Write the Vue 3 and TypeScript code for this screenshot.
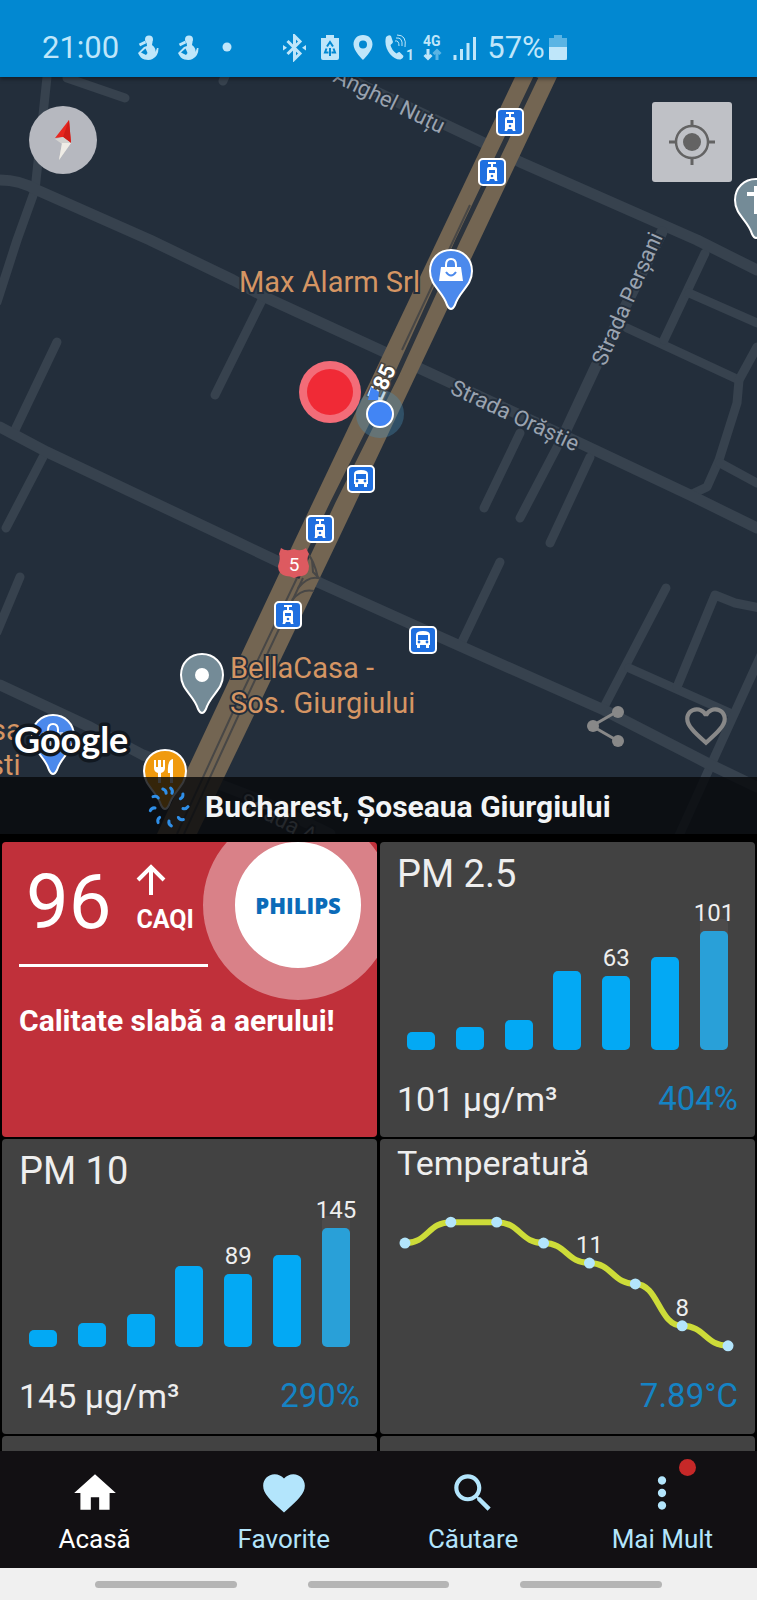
<script setup lang="ts">
interface Bar {
  height: number
  label?: string
}

interface Metric {
  title: string
  value: string
  percent: string
  bars: Bar[]
}

interface Point {
  x: number
  y: number
  label?: string
}

const pm25: Metric = {
  title: 'PM 2.5',
  value: '101 µg/m³',
  percent: '404%',
  bars: [
    { height: 18 },
    { height: 23 },
    { height: 30 },
    { height: 79 },
    { height: 74, label: '63' },
    { height: 93 },
    { height: 119, label: '101' },
  ],
}

const pm10: Metric = {
  title: 'PM 10',
  value: '145 µg/m³',
  percent: '290%',
  bars: [
    { height: 17 },
    { height: 24 },
    { height: 33 },
    { height: 81 },
    { height: 73, label: '89' },
    { height: 92 },
    { height: 119, label: '145' },
  ],
}

const metrics: Metric[] = [pm25, pm10]

const temperature: Point[] = [
  { x: 8, y: 50 },
  { x: 54, y: 29 },
  { x: 100, y: 29 },
  { x: 147, y: 50 },
  { x: 193, y: 70, label: '11' },
  { x: 239, y: 91 },
  { x: 286, y: 133, label: '8' },
  { x: 332, y: 153 },
]

const temperaturePath = temperature
  .map((p, i) => {
    if (i === 0) return `M${p.x} ${p.y}`
    const prev = temperature[i - 1]
    const mid = (prev.x + p.x) / 2
    return `C${mid} ${prev.y} ${mid} ${p.y} ${p.x} ${p.y}`
  })
  .join(' ')

const wideRoads: string[] = [
  'M330 70L484 143L520 162L697 240L757 270',
  'M0 180Q20 180 37 190L150 240L233 280L267 298L380 350L449 382L584 445L690 495L757 528',
  'M0 427L47 452L235 541L277 561L320 583L440 637L604 710L707 763L757 787',
  'M0 685L90 727L143 755L260 800L330 834',
  'M662 232L595 368L566 430',
]

const narrowRoads: string[] = [
  'M47 77L35 190L17 240L-3 302',
  'M67 78L125 98',
  'M226 74L223 81',
  'M262 300L215 395',
  'M57 342L15 430',
  'M43 457L6 528',
  'M20 577L-3 632',
  'M566 430L520 518',
  'M520 433L484 508',
  'M590 457L550 543',
  'M627 328L739 380',
  'M705 253L664 340',
  'M689 293L757 323',
  'M757 347L739 380L737 403L719 460L707 487L690 495',
  'M720 463L757 483',
  'M500 562L462 642',
  'M666 588L604 707',
  'M629 668L730 713',
  'M677 687L715 595L735 603L760 608',
  'M762 653L710 767L677 840',
]

const tramStops = [
  { x: 510, y: 122 },
  { x: 492, y: 172 },
  { x: 320, y: 529 },
  { x: 288, y: 615 },
]

const busStops = [
  { x: 361, y: 479 },
  { x: 423, y: 640 },
]

const spinnerAngles = [8, 50, 92, 134, 176, 218, 262, 306, 344]

const navItems = [
  { label: 'Acasă', icon: 'M10 20v-6h4v6h5v-8h3L12 3 2 12h3v8z', active: true, badge: false },
  {
    label: 'Favorite',
    icon: 'M12 21.35l-1.45-1.32C5.4 15.36 2 12.28 2 8.5 2 5.42 4.42 3 7.5 3c1.74 0 3.41.81 4.5 2.09C13.09 3.81 14.76 3 16.5 3 19.58 3 22 5.42 22 8.5c0 3.78-3.4 6.86-8.55 11.54L12 21.35z',
    active: false,
    badge: false,
  },
  {
    label: 'Căutare',
    icon: 'M15.5 14h-.79l-.28-.27C15.41 12.59 16 11.11 16 9.5 16 5.91 13.09 3 9.5 3S3 5.91 3 9.5 5.91 16 9.5 16c1.61 0 3.09-.59 4.23-1.57l.27.28v.79l5 4.99L20.49 19l-4.99-5zm-6 0C7.01 14 5 11.99 5 9.5S7.01 5 9.5 5 14 7.01 14 9.5 11.99 14 9.5 14z',
    active: false,
    badge: false,
  },
  {
    label: 'Mai Mult',
    icon: 'M12 8c1.1 0 2-.9 2-2s-.9-2-2-2-2 .9-2 2 .9 2 2 2zm0 2c-1.1 0-2 .9-2 2s.9 2 2 2 2-.9 2-2-.9-2-2-2zm0 6c-1.1 0-2 .9-2 2s.9 2 2 2 2-.9 2-2-.9-2-2-2z',
    active: false,
    badge: true,
  },
]
</script>

<template>
  <div class="app">
    <header class="status">
      <div class="status-group notifications">
        <span class="status-text">21:00</span>
        <svg v-for="n in 2" :key="n" class="ico" width="22" height="26" viewBox="0 0 22 26" aria-hidden="true">
          <circle cx="12" cy="4.5" r="4" />
          <path d="M9.5 7h6l-.5 3q4 3 3.500 7l1.500-4h1.500q0 8-6 11-3 1.500-8 .5-4-1-6.500-6.500l6-6 3-1z" />
          <path class="line" d="M2.500 10L8.500 7" />
          <path class="hole" d="M4 17.500l4.500-4 2 4.500-1.500 2z" />
        </svg>
        <svg class="ico" width="20" height="26" viewBox="0 0 20 26" aria-hidden="true">
          <circle cx="10" cy="12" r="4.5" />
        </svg>
      </div>
      <div class="status-group">
        <svg class="ico" width="28" height="28" viewBox="0 0 28 28" aria-hidden="true">
          <path class="line" d="M6.500 7L19 19.500L13.500 25V2L19 7.500L6.500 20" />
          <path d="M2 11l4 2.700-4 2.700zM25 11l-4 2.700 4 2.700z" />
        </svg>
        <svg class="ico" width="22" height="28" viewBox="0 0 22 28" aria-hidden="true">
          <path d="M7 1h8v3h5v20q0 2-2 2H4q-2 0-2-2V4h5z" />
          <path class="cut" d="M8 12.500L11 8l3 4.500M14.500 14.500l1.500 4h-3.500M9.500 18.500H6l1.500-4M11 14v8" />
        </svg>
        <svg class="ico" width="24" height="28" viewBox="0 0 24 28" aria-hidden="true">
          <path fill-rule="evenodd" d="M12 1C6 1 2.500 5.200 2.500 10.500 2.500 17 12 26 12 26s9.500-9 9.500-15.500C21.500 5.200 18 1 12 1zm0 5.500a4 4 0 1 1 0 8 4 4 0 0 1 0-8z" />
        </svg>
        <svg class="ico" width="28" height="28" viewBox="0 0 28 28" aria-hidden="true">
          <path d="M1 3q3-3 5-1l2 6q0 1-2.500 3 1 5 6 8.500 2-2 3-1.500l4 4q0 2-3 3.500C7 26-2 14 1 3z" />
          <path class="thin" d="M10 7q4-1 4 5M11 4q7-1 6 8M12 1q10 0 8 12" />
          <text x="21" y="26" class="small-text">1</text>
        </svg>
        <svg class="ico" width="20" height="28" viewBox="0 0 20 28" aria-hidden="true">
          <text x="0" y="12" class="net-text">4G</text>
          <path class="line" d="M5 15v9M1.500 21L5 24.500 8.500 21" />
          <path class="line dim" d="M14 26v-9M10.500 20l3.500-3.500 3.500 3.500" />
        </svg>
        <svg class="ico" width="24" height="28" viewBox="0 0 24 28" aria-hidden="true">
          <path class="signal" d="M2 26v-5M8.500 26V15M15 26V9M21.500 26V3" />
        </svg>
        <div class="battery">
          <span class="status-text">57%</span>
          <svg class="ico" width="18" height="28" viewBox="0 0 18 28" aria-hidden="true">
            <path class="faded" d="M5 1h8v3h5v22H0V4h5z" />
            <path d="M0 13h18v11q0 2-2 2H2q-2 0-2-2z" />
          </svg>
        </div>
      </div>
    </header>

    <main class="content">
      <section class="map" aria-label="Hartă">
        <svg class="map-canvas" viewBox="0 77 757 757" preserveAspectRatio="xMidYMid slice">
          <rect x="0" y="77" width="757" height="757" fill="#232e3b" />
          <path v-for="d in narrowRoads" :key="d" :d="d" class="road narrow" />
          <path v-for="d in wideRoads" :key="d" :d="d" class="road wide" />

          <path d="M515 77H557L338 540L197 834H157L295 540Z" fill="#736552" />
          <path d="M536 77L458 240L397 374L333 502L297 578" class="tracks" />
          <path d="M470 205L402 350M297 578L233 712L177 834M303 578L240 712L184 834" class="rails" />
          <path d="M307 553Q314 560 318 578Q308 576 298 588M312 560L313 572Q318 577 320 579M292 600Q302 588 314 591" class="rails" />

          <text class="street" transform="translate(332 81) rotate(26)">Anghel Nuțu</text>
          <text class="street" transform="translate(449 393) rotate(25)">Strada Orăștie</text>
          <text class="street" transform="translate(605 367) rotate(-66)">Strada Perșani</text>
          <text class="street" transform="translate(238 806) rotate(27)">Strada A</text>
          <text class="highway" transform="translate(381 403) rotate(-66)">E85</text>

          <circle cx="380" cy="414" r="24" fill="#4a90b8" fill-opacity=".35" />
          <path d="M368 400L371 387L379 392L378 400Z" fill="#4285f4" />
          <circle cx="380" cy="414" r="13" fill="#4285f4" stroke="#fff" stroke-width="2" />

          <circle cx="330" cy="392" r="31" fill="#f36c78" />
          <circle cx="330" cy="392" r="23" fill="#f02a36" />

          <g v-for="s in tramStops" :key="`t${s.y}`" :transform="`translate(${s.x} ${s.y})`">
            <rect x="-13" y="-13" width="26" height="26" rx="4" fill="#1f6fe0" stroke="#fff" stroke-width="2" />
            <path d="M-4-10H4V-8H1V-5H3Q5-5 5-3V7L5.500 9H3L2 7H-2L-3 9H-5.500L-5 7V-3Q-5-5-3-5H-1V-8H-4Z" fill="#fff" />
            <rect x="-3" y="-2" width="6" height="3" fill="#1f6fe0" />
            <circle cx="0" cy="4" r="1.3" fill="#1f6fe0" />
          </g>
          <g v-for="s in busStops" :key="`b${s.y}`" :transform="`translate(${s.x} ${s.y})`">
            <rect x="-13" y="-13" width="26" height="26" rx="4" fill="#1f6fe0" stroke="#fff" stroke-width="2" />
            <path d="M-7-5Q-7-9 0-9T7-5V5H6V8H3V5H-3V8H-6V5H-7Z" fill="#fff" />
            <rect x="-5" y="-5" width="10" height="5" fill="#1f6fe0" />
            <circle cx="-4" cy="2" r="1.4" fill="#1f6fe0" />
            <circle cx="4" cy="2" r="1.4" fill="#1f6fe0" />
          </g>

          <path d="M281 548Q286 552 294 549Q301 552 306 548L309 554Q306 558 309 566Q309 575 302 576Q298 576 294 578Q290 576 286 576Q278 574 278 566Q281 558 279 554Z" fill="#dd5a60" />
          <text class="shield" x="294" y="571">5</text>

          <text class="place" x="239" y="292">Max Alarm Srl</text>
          <text class="place" x="230" y="678">BellaCasa -</text>
          <text class="place" x="230" y="713">Sos. Giurgiului</text>
          <text class="place" x="-9" y="740">sa</text>
          <text class="place" x="-11" y="775">sti</text>

          <defs>
            <path id="pin" d="M0-21C-12-21-21-12-21 0C-21 15-8 20-4 34Q-2 38 0 38T4 34C8 20 21 15 21 0C21-12 12-21 0-21Z" />
          </defs>
          <g transform="translate(451 271)">
            <use href="#pin" fill="#4b89ec" class="pin" />
            <path d="M-10-4H10L12 10H-12Z" fill="#fff" />
            <path d="M-5-3V-6Q-5-12 0-12T5-6V-3" fill="none" stroke="#fff" stroke-width="2" />
            <path d="M-5 1Q0 8 5 1" fill="none" stroke="#4b89ec" stroke-width="2" />
          </g>
          <g transform="translate(202 675)">
            <use href="#pin" fill="#748b97" class="pin" />
            <circle cx="0" cy="0" r="7" fill="#fff" />
          </g>
          <g transform="translate(756 200)">
            <use href="#pin" fill="#748b97" class="pin" />
            <path d="M-2-14H3V-8H10V-4H3V14H-2V-4H-9V-8H-2Z" fill="#fff" />
          </g>
          <g transform="translate(53 736)">
            <use href="#pin" fill="#4b89ec" class="pin" />
            <path d="M-10-4H10L12 10H-12Z" fill="#b9cdf0" />
            <path d="M-5-3V-6Q-5-12 0-12T5-6V-3" fill="none" stroke="#fff" stroke-width="2" />
          </g>
          <g transform="translate(165 771)">
            <use href="#pin" fill="#f09a0e" class="pin" />
            <path d="M-11-11V-3Q-11 1-7 2V12H-4V2Q0 1 0-3V-11H-2V-4H-4V-11H-7V-4H-9V-11ZM8-12Q2-11 3 2H5V12H8Z" fill="#fff" />
          </g>
          <text class="google" x="14" y="753">Google</text>
        </svg>

        <button class="compass" type="button" aria-label="Busolă">
          <svg width="68" height="68" viewBox="0 0 68 68" aria-hidden="true">
            <path d="M40 14L26 32L34 31L42 37Z" fill="#e8261f" />
            <path d="M40 14L34 31L42 37Z" fill="#cf1d18" />
            <path d="M26 33L34 31L42 37L30 54L33 38Z" fill="#d3d2d0" />
            <path d="M33 37L42 37L30 54Z" fill="#efece6" />
          </svg>
        </button>
        <button class="locate" type="button" aria-label="Locația mea">
          <svg width="80" height="80" viewBox="0 0 80 80" aria-hidden="true">
            <circle cx="40" cy="40" r="16" fill="none" stroke="#636363" stroke-width="2.500" />
            <circle cx="40" cy="40" r="9" fill="#636363" />
            <path d="M40 18v6M40 56v7M17 40h7M56 40h7" stroke="#636363" stroke-width="3" />
          </svg>
        </button>
        <div class="map-actions">
          <button type="button" aria-label="Distribuie">
            <svg width="48" height="48" viewBox="0 0 48 48" aria-hidden="true">
              <path d="M37 9L11 24L37 39" fill="none" stroke="#888" stroke-width="3" />
              <circle cx="37" cy="10" r="6" fill="#888" />
              <circle cx="12" cy="24" r="6" fill="#888" />
              <circle cx="37" cy="39" r="6" fill="#888" />
            </svg>
          </button>
          <button type="button" aria-label="Adaugă la favorite">
            <svg width="50" height="50" viewBox="0 0 24 24" aria-hidden="true">
              <path fill="#888" d="M16.500 3c-1.740 0-3.410.81-4.500 2.090C10.910 3.810 9.240 3 7.500 3 4.420 3 2 5.420 2 8.500c0 3.780 3.400 6.860 8.550 11.540L12 21.350l1.450-1.320C18.600 15.360 22 12.280 22 8.500 22 5.420 19.580 3 16.500 3zm-4.400 15.550l-.1.100-.1-.100C7.140 14.240 4 11.390 4 8.500 4 6.500 5.500 5 7.500 5c1.540 0 3.040.99 3.570 2.360h1.870C13.460 5.990 14.960 5 16.500 5c2 0 3.500 1.500 3.500 3.500 0 2.890-3.140 5.740-7.900 10.050z" />
            </svg>
          </button>
        </div>
        <div class="place-bar">
          <svg class="spinner" width="44" height="44" viewBox="-22 -22 44 44" aria-hidden="true">
            <path v-for="a in spinnerAngles" :key="a" :transform="`rotate(${a})`" d="M-1-19Q2-17 1-14" />
          </svg>
          <h1>Bucharest, Șoseaua Giurgiului</h1>
        </div>
      </section>

      <section class="grid">
        <article class="card caqi">
          <div class="sponsor"><span>PHILIPS</span></div>
          <div class="score">
            <strong>96</strong>
            <div class="score-unit">
              <svg width="30" height="32" viewBox="0 0 30 32" aria-hidden="true">
                <path d="M15 32V4M2 17L15 4L28 17" fill="none" stroke="#fff" stroke-width="4" />
              </svg>
              <span>CAQI</span>
            </div>
          </div>
          <p>Calitate slabă a aerului!</p>
        </article>

        <article v-for="m in metrics" :key="m.title" class="card metric">
          <h2>{{ m.title }}</h2>
          <div class="bars">
            <div v-for="(b, i) in m.bars" :key="i" class="bar-col">
              <span v-if="b.label" class="bar-label">{{ b.label }}</span>
              <span class="bar" :class="{ now: i === m.bars.length - 1 }" :style="{ height: `${b.height}px` }"></span>
            </div>
          </div>
          <footer>
            <span class="value">{{ m.value }}</span>
            <span class="percent">{{ m.percent }}</span>
          </footer>
        </article>

        <article class="card metric">
          <h2 class="long">Temperatură</h2>
          <svg class="trend" viewBox="0 0 342 154" role="img" aria-label="Evoluția temperaturii">
            <path :d="temperaturePath" fill="none" stroke="#cddc39" stroke-width="6" />
            <g v-for="p in temperature" :key="p.x">
              <circle :cx="p.x" :cy="p.y" r="5.5" fill="#b3e5fc" />
              <text v-if="p.label" :x="p.x" :y="p.y - 10">{{ p.label }}</text>
            </g>
          </svg>
          <footer class="end">
            <span class="percent">7.89°C</span>
          </footer>
        </article>

        <article class="card metric"></article>
        <article class="card metric"></article>
      </section>
    </main>

    <nav class="tabs">
      <button v-for="n in navItems" :key="n.label" type="button" :class="{ active: n.active }">
        <svg width="50" height="50" viewBox="0 0 24 24" aria-hidden="true"><path :d="n.icon" /></svg>
        <span>{{ n.label }}</span>
        <i v-if="n.badge" class="badge"></i>
      </button>
    </nav>

    <div class="system">
      <button type="button" aria-label="Recente"></button>
      <button type="button" aria-label="Ecran principal"></button>
      <button type="button" aria-label="Înapoi"></button>
    </div>
  </div>
</template>

<style>
body {
  margin: 0;
  background: #000;
}
</style>

<style scoped>
.app {
  display: flex;
  flex-direction: column;
  height: 100vh;
  background: #000;
  color: #eee;
  font-family: Roboto, "Noto Sans", sans-serif;
}

button {
  margin: 0;
  padding: 0;
  border: 0;
  background: none;
  color: inherit;
  font: inherit;
  cursor: pointer;
}

svg {
  display: block;
  flex: none;
}

/* status bar */
.status {
  position: relative;
  z-index: 1;
  display: flex;
  flex: none;
  align-items: center;
  gap: 44px;
  box-sizing: border-box;
  height: 77px;
  padding: 18px 0 0 42px;
  background: #0288d1;
  box-shadow: 0 2px 4px rgba(0, 0, 0, 0.4);
  color: #bfe6fa;
}

.status-group {
  display: flex;
  align-items: center;
  gap: 10px;
}

.notifications {
  gap: 18px;
}

.battery {
  display: flex;
  align-items: center;
  gap: 4px;
}

.status-text {
  font-size: 31px;
  line-height: 36px;
}

.ico {
  fill: #bfe6fa;
}

.ico .line {
  fill: none;
  stroke: #bfe6fa;
  stroke-width: 3;
}

.ico .line.dim {
  stroke: #5ab4e4;
}

.ico .thin {
  fill: none;
  stroke: #bfe6fa;
  stroke-width: 1;
}

.ico .signal {
  fill: none;
  stroke: #bfe6fa;
  stroke-width: 3;
}

.ico .hole {
  fill: #0288d1;
}

.ico .cut {
  fill: none;
  stroke: #0288d1;
  stroke-width: 2;
}

.ico .faded {
  fill: #5ab4e4;
}

.small-text {
  font-size: 14px;
  font-weight: 700;
}

.net-text {
  font-size: 14px;
  font-weight: 700;
}

/* scrolling content */
.content {
  flex: 1;
  min-height: 0;
  overflow-y: auto;
  scrollbar-width: none;
}

.map {
  position: relative;
  aspect-ratio: 1;
  overflow: hidden;
}

.map-canvas {
  width: 100%;
  height: 100%;
}

.road {
  fill: none;
  stroke: #37424e;
  stroke-linecap: round;
  stroke-linejoin: round;
}

.wide {
  stroke-width: 11;
}

.narrow {
  stroke-width: 9;
}

.tracks {
  fill: none;
  stroke: #2b333d;
  stroke-width: 5;
}

.rails {
  fill: none;
  stroke: #484746;
  stroke-width: 2;
}

.street {
  fill: #9aa3b0;
  font-size: 22px;
  stroke: #232e3b;
  stroke-width: 4;
  paint-order: stroke;
}

.highway {
  fill: #fff;
  font-size: 22px;
  font-weight: 700;
  stroke: #4a4540;
  stroke-width: 3;
  paint-order: stroke;
}

.place {
  fill: #d59563;
  font-size: 29px;
  stroke: #232e3b;
  stroke-width: 4;
  paint-order: stroke;
}

.shield {
  fill: #fff;
  font-size: 19px;
  text-anchor: middle;
}

.pin {
  stroke: #fff;
  stroke-width: 2;
}

.google {
  fill: #fff;
  font-family: Lato, "Open Sans", sans-serif;
  font-size: 36px;
  font-weight: 700;
  stroke: #111820;
  stroke-width: 7;
  stroke-linejoin: round;
  paint-order: stroke;
}

.compass,
.locate {
  position: absolute;
  top: 29px;
  left: 29px;
  overflow: hidden;
  border-radius: 50%;
  background: #b6b8bf;
}

.locate {
  top: 25px;
  right: 25px;
  left: auto;
  border-radius: 3px;
  background: #bfc1c6;
}

.map-actions {
  position: absolute;
  right: 26px;
  bottom: 83px;
  display: flex;
  align-items: center;
  gap: 52px;
}

.place-bar {
  position: absolute;
  right: 0;
  bottom: 0;
  left: 0;
  display: flex;
  align-items: center;
  gap: 14px;
  box-sizing: border-box;
  height: 57px;
  padding: 2px 0 0 147px;
  background: rgba(6, 8, 10, 0.8);
}

.place-bar h1 {
  margin: 0;
  color: #f2f4f6;
  font-size: 30px;
  font-weight: 700;
  line-height: 40px;
}

.spinner path {
  fill: none;
  stroke: #2f8fe8;
  stroke-width: 3;
  stroke-linecap: round;
}

/* cards */
.grid {
  display: grid;
  grid-template-columns: 1fr 1fr;
  grid-auto-rows: minmax(295px, auto);
  gap: 2px 3px;
  padding: 8px 2px 0;
}

.card {
  display: flex;
  flex-direction: column;
  box-sizing: border-box;
  min-width: 0;
  padding: 0 17px;
  border-radius: 4px;
  background: #424242;
}

.caqi {
  position: relative;
  overflow: hidden;
  background: #c0303a;
  color: #fff;
}

.sponsor {
  position: absolute;
  top: -32px;
  right: -16px;
  display: grid;
  place-items: center;
  box-sizing: border-box;
  width: 190px;
  height: 190px;
  border: 32px solid #d98188;
  border-radius: 50%;
  background: #fff;
  color: #0b6bb8;
  font-family: "Open Sans", "Noto Sans", sans-serif;
  font-size: 22px;
  font-weight: 800;
}

.score {
  display: flex;
  align-items: flex-end;
  gap: 25px;
  box-sizing: border-box;
  width: 189px;
  height: 125px;
  padding: 0 0 24px 7px;
  border-bottom: 3px solid #fff;
}

.score strong {
  font-size: 76px;
  font-weight: 400;
  line-height: 76px;
}

.score-unit {
  display: flex;
  flex-direction: column;
  gap: 12px;
  padding-bottom: 8px;
  font-size: 25px;
  font-weight: 700;
  line-height: 25px;
}

.caqi p {
  margin: 36px 0 0;
  font-size: 30px;
  font-weight: 700;
  line-height: 36px;
}

.metric h2 {
  box-sizing: border-box;
  height: 54px;
  margin: 0;
  padding-top: 10px;
  font-size: 38px;
  font-weight: 400;
  line-height: 44px;
}

.metric h2.long {
  padding-top: 2px;
  font-size: 34px;
}

.bars {
  display: flex;
  align-items: flex-end;
  justify-content: space-between;
  height: 154px;
  padding: 0 10px;
}

.bar-col {
  display: flex;
  flex-direction: column;
  align-items: center;
  width: 28px;
}

.bar-label {
  position: relative;
  z-index: 1;
  margin-bottom: 6px;
  font-size: 24px;
  line-height: 24px;
}

.bar {
  width: 28px;
  border-radius: 5px;
  background: #03a9f4;
}

.bar.now {
  background: #29a0d8;
  box-shadow: 0 -12px #4d4b4b;
}

.trend {
  width: 100%;
  height: 154px;
  overflow: visible;
}

.trend text {
  fill: #eee;
  font-size: 24px;
  text-anchor: middle;
}

.metric footer {
  display: flex;
  justify-content: space-between;
  margin-top: 29px;
  font-size: 33px;
  line-height: 40px;
}

.metric footer.end {
  justify-content: flex-end;
}

.value {
  font-size: 34px;
}

.percent {
  color: #1583c4;
}

/* bottom navigation */
.tabs {
  display: grid;
  flex: none;
  grid-template-columns: repeat(4, 1fr);
  background: #121013;
  color: #b3e5fc;
}

.tabs button {
  position: relative;
  display: flex;
  flex-direction: column;
  align-items: center;
  gap: 6px;
  padding: 17px 0 14px;
  font-size: 26px;
  line-height: 30px;
}

.tabs svg {
  fill: currentColor;
}

.tabs .active {
  color: #fff;
}

.badge {
  position: absolute;
  top: 8px;
  left: calc(50% + 17px);
  width: 17px;
  height: 17px;
  border-radius: 50%;
  background: #c62828;
}

.system {
  display: flex;
  flex: none;
  align-items: center;
  justify-content: space-between;
  height: 32px;
  padding: 0 95px;
  background: #f0f0f0;
}

.system button {
  width: 25%;
  height: 7px;
  border-radius: 4px;
  background: #b5b5b5;
}
</style>
